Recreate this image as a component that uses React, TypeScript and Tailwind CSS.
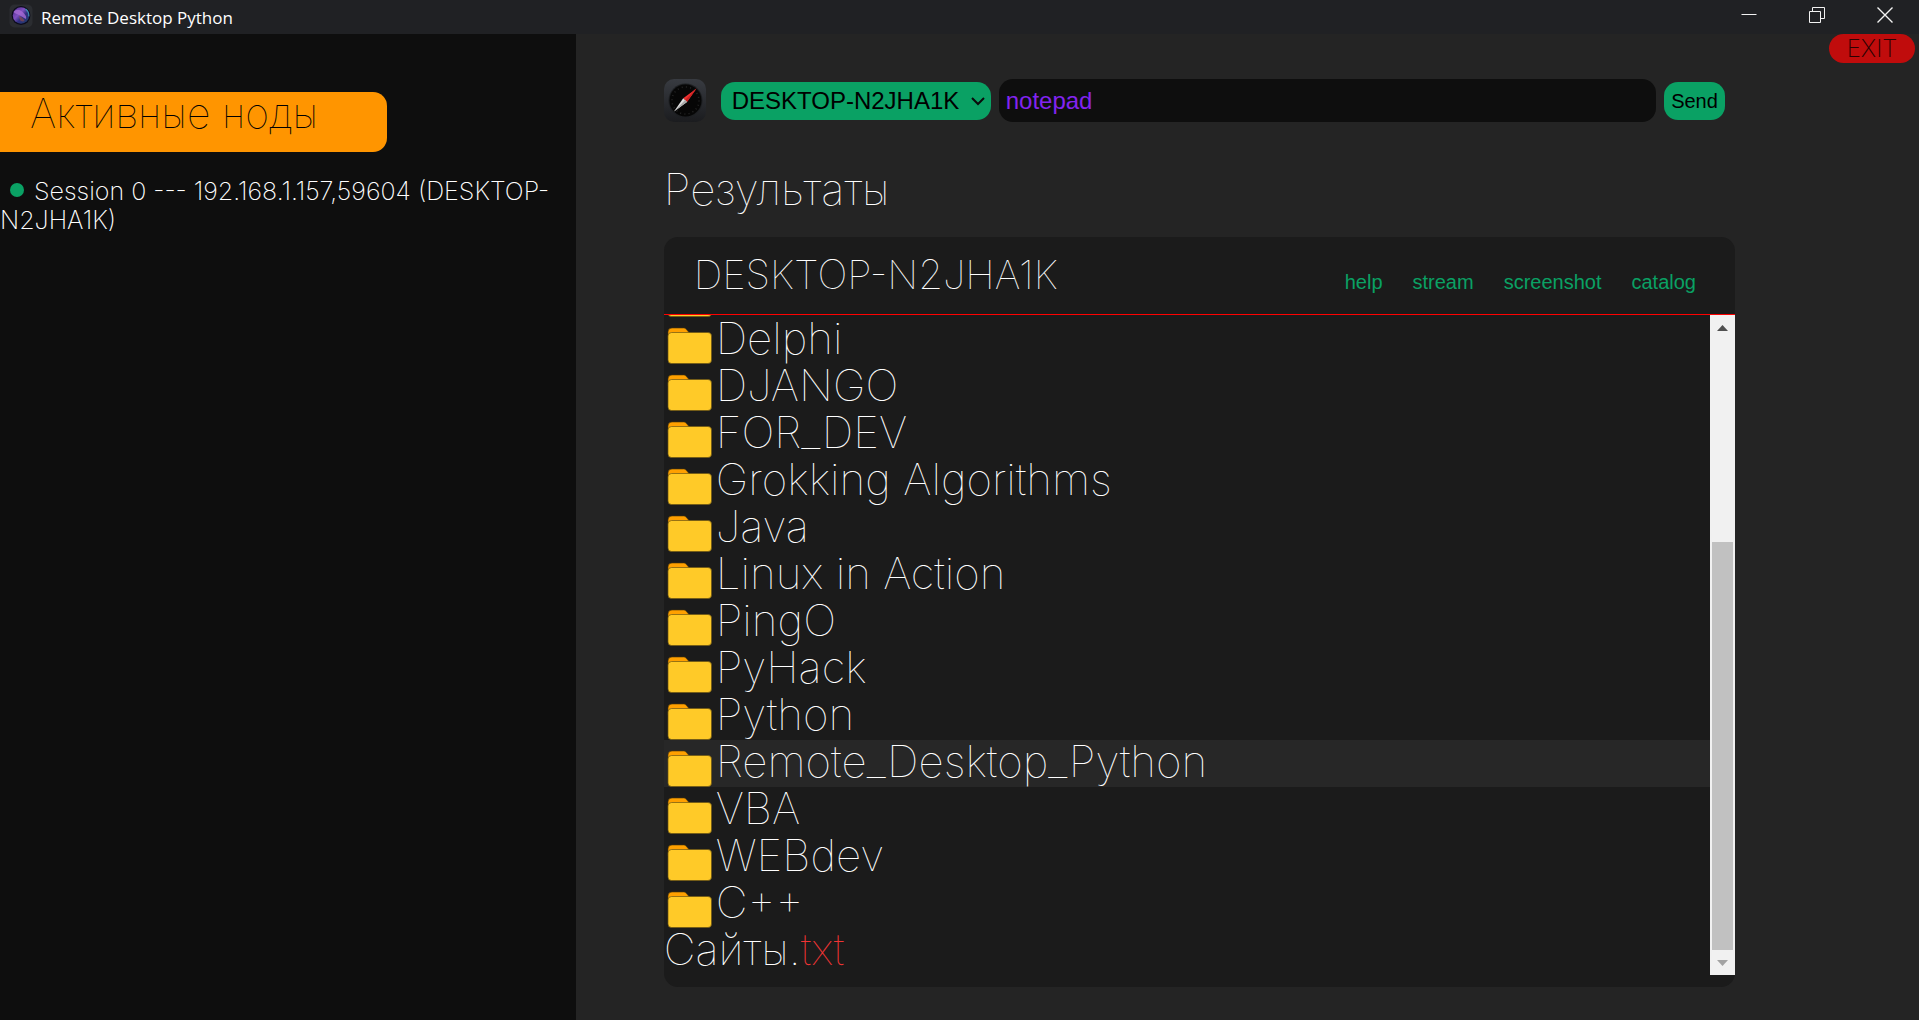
import { useState } from "react";

const folders = [
  "Delphi",
  "DJANGO",
  "FOR_DEV",
  "Grokking Algorithms",
  "Java",
  "Linux in Action",
  "PingO",
  "PyHack",
  "Python",
  "Remote_Desktop_Python",
  "VBA",
  "WEBdev",
  "C++",
];

const actions = ["help", "stream", "screenshot", "catalog"];

function AppLogo() {
  return (
    <svg viewBox="0 0 24 24" className="size-6" aria-hidden="true">
      <defs>
        <linearGradient id="orb" x1="0" y1="0" x2="1" y2="1">
          <stop offset="0" stopColor="#4a2a86" />
          <stop offset="0.4" stopColor="#8050c0" />
          <stop offset="0.6" stopColor="#302f80" />
          <stop offset="1" stopColor="#1c3f66" />
        </linearGradient>
      </defs>
      <rect x="0.5" y="0.5" width="23" height="23" rx="5" fill="#2b2d31" />
      <circle cx="12" cy="11.500" r="9.4" fill="#0c0b1c" />
      <circle cx="12" cy="11.500" r="8.2" fill="url(#orb)" />
      <path d="M4.500 8c3-4 8-2 11 2 1.500 2 2 3 1.500 5-3-1-4-3-7-4-2-1-4-1.500-5.500-3z" fill="#a86bd6" opacity="0.8" />
      <path d="M10 12c3 1 5 3 5.500 5-2 1-4 0-4.500-1z" fill="#8a4a4c" opacity="0.7" />
      <path d="M16.500 5a8.200 8.200 0 0 1 3.300 7.400" fill="none" stroke="#3c8fb0" strokeWidth="1.200" />
    </svg>
  );
}

function CompassIcon() {
  return (
    <svg viewBox="0 0 42 43" className="h-[43px] w-[42px] shrink-0" aria-hidden="true">
      <defs>
        <linearGradient id="case" x1="0" y1="0" x2="0" y2="1">
          <stop offset="0" stopColor="#383b41" />
          <stop offset="1" stopColor="#1b1c1f" />
        </linearGradient>
      </defs>
      <rect width="42" height="43" rx="10" fill="url(#case)" />
      <circle cx="21.500" cy="21.500" r="17" fill="#1d1f22" />
      <circle cx="21.500" cy="21.500" r="16" fill="#060606" />
      <circle cx="21.500" cy="21.500" r="13.500" fill="none" stroke="#262626" strokeWidth="1.500" strokeDasharray="1 3.240" />
      <path d="M32.500 9.500 19.200 19.200l3.800 3.800z" fill="#ee3030" />
      <path d="M32.500 9.500 21.100 21.100l1.900 1.900z" fill="#c92020" />
      <path d="M10 32.500 19.200 19.200l3.800 3.800z" fill="#e2e2e2" />
      <path d="M10 32.500 21.100 21.100l1.900 1.900z" fill="#a8a8a8" />
    </svg>
  );
}

function FolderIcon() {
  return (
    <svg viewBox="0 0 46 37" className="h-[37px] w-[46px] shrink-0" aria-hidden="true">
      <path
        d="M5 1h11.500c1.200 0 2 .4 2.700 1.200L22 5.500V12H1V5a4 4 0 0 1 4-4z"
        fill="#ffa000"
        stroke="#4d3806"
        strokeWidth="0.6"
      />
      <rect x="1" y="5.500" width="43.500" height="31" rx="3.500" fill="#ffca28" stroke="#6b5413" strokeWidth="0.7" />
    </svg>
  );
}

function WindowControls() {
  const stroke = { fill: "none", stroke: "#f2f2f2", strokeWidth: 1 } as const;
  return (
    <div className="flex h-full shrink-0">
      <button type="button" aria-label="Minimize" className="flex w-[68px] items-center justify-center pb-1">
        <svg viewBox="0 0 16 16" className="size-4">
          <path d="M0.500 7.500h15" {...stroke} />
        </svg>
      </button>
      <button type="button" aria-label="Restore" className="flex w-[68px] items-center justify-center pb-1">
        <svg viewBox="0 0 16 16" className="size-4">
          <path d="M.5 4.500h11v11H.5zM3.500 4.500v-4h12v11h-4" {...stroke} />
        </svg>
      </button>
      <button type="button" aria-label="Close" className="flex w-[68px] items-center justify-center pb-1">
        <svg viewBox="0 0 16 16" className="size-4">
          <path d="M.5.5l15 15M15.500.5l-15 15" {...stroke} strokeWidth={1.400} />
        </svg>
      </button>
    </div>
  );
}

function Scrollbar() {
  return (
    <div className="flex w-[25px] shrink-0 flex-col bg-[#f1f1f1] px-[2px]" aria-hidden="true">
      <div className="flex h-[25px] items-center justify-center">
        <svg viewBox="0 0 11 6" className="h-[6px] w-[11px]">
          <path d="M0 6 5.500 0 11 6z" fill="#505050" />
        </svg>
      </div>
      <div className="flex-[202]" />
      <div className="flex-[408] bg-[#c1c1c1]" />
      <div className="flex h-[25px] items-center justify-center">
        <svg viewBox="0 0 11 6" className="h-[6px] w-[11px]">
          <path d="M0 0h11L5.500 6z" fill="#a3a3a3" />
        </svg>
      </div>
    </div>
  );
}

export default function App() {
  const [command, setCommand] = useState("notepad");

  return (
    <div className="flex h-screen flex-col bg-[#242424] font-['Inter',sans-serif] font-thin text-white">
      <header className="flex h-[34px] shrink-0 items-center justify-between bg-[#202124]">
        <div className="flex items-center gap-2 pb-0.5 pl-[9px]">
          <AppLogo />
          <span className="pt-1 font-['Open_Sans',sans-serif] text-[17px] leading-6 font-normal">Remote Desktop Python</span>
        </div>
        <WindowControls />
      </header>

      <div className="flex min-h-0 flex-1">
        <aside className="w-[30%] shrink-0 bg-[#0e0e0e] pt-[58px]">
          <h2 className="h-[60px] w-[387px] rounded-r-[14px] bg-[#ff9500] pl-[30px] text-[41px] leading-[42px] font-thin text-black">
            Активные ноды
          </h2>
          <p className="mt-[25px] text-[25px] leading-[29px] font-extralight">
            <span className="mr-[10px] ml-[10px] inline-block size-[14px] rounded-full bg-[#0aa164] align-[3px]" />
            Session 0 --- 192.168.1.157,59604 (DESKTOP-N2JHA1K)
          </p>
        </aside>

        <main className="flex min-w-0 flex-1 flex-col">
          <div className="flex h-[29px] shrink-0 justify-end pr-1">
            <button
              type="button"
              className="h-[29px] w-[86px] rounded-full bg-[#c00c0c] text-[24px] leading-[29px] font-extralight text-[#2a0202]"
            >
              EXIT
            </button>
          </div>

          <div className="mr-[184px] ml-[88px] flex min-h-0 flex-1 flex-col pb-[33px]">
            <form
              className="mt-4 flex items-center font-['Liberation_Sans',Arial,sans-serif] font-normal"
              onSubmit={(e) => e.preventDefault()}
            >
              <CompassIcon />
              <div className="relative ml-[15px] shrink-0">
                <select
                  aria-label="Node"
                  className="block h-[38px] w-[270px] appearance-none rounded-[14px] bg-[#0aa164] pl-[11px] text-[24px] text-black"
                >
                  <option>DESKTOP-N2JHA1K</option>
                </select>
                <svg
                  viewBox="0 0 14 9"
                  className="pointer-events-none absolute top-[15px] right-[6px] h-[9px] w-[14px]"
                  aria-hidden="true"
                >
                  <path d="M1 1l6 6 6-6" fill="none" stroke="#0b0b0b" strokeWidth="2" />
                </svg>
              </div>
              <input
                aria-label="Command"
                value={command}
                onChange={(e) => setCommand(e.target.value)}
                className="ml-2 h-[43px] min-w-0 flex-1 rounded-[14px] bg-[#0e0e0e] px-[7px] text-[24px] text-[#8224f0] outline-none"
              />
              <button
                type="submit"
                className="mr-[10px] ml-2 h-[38px] w-[61px] rounded-[14px] bg-[#0aa164] text-[20px] text-black"
              >
                Send
              </button>
            </form>

            <h1 className="mt-[41px] text-[44px] leading-[52px] font-thin">Результаты</h1>

            <section className="mt-[22px] flex min-h-0 flex-1 flex-col rounded-[14px] bg-[#1b1b1b] pb-3">
              <div className="flex h-[78px] shrink-0 items-center justify-between border-b border-[#ff0000] pr-[39px] pl-[30px]">
                <h2 className="pb-0.5 text-[40px] leading-[48px] font-thin">DESKTOP-N2JHA1K</h2>
                <nav className="flex gap-[30px] pt-3 font-['Liberation_Sans',Arial,sans-serif] text-[20px] font-normal text-[#0aa164]">
                  {actions.map((name) => (
                    <a key={name} href={`#${name}`}>
                      {name}
                    </a>
                  ))}
                </nav>
              </div>

              <div className="flex min-h-0 flex-1">
                <ul className="flex min-w-0 flex-1 flex-col justify-end overflow-hidden text-[44px] leading-[47px]">
                  <li className="flex h-[47px] shrink-0 items-end pl-[3px]" aria-hidden="true">
                    <FolderIcon />
                  </li>
                  {folders.map((name) => (
                    <li
                      key={name}
                      className={
                        name === "Remote_Desktop_Python"
                          ? "flex h-[47px] shrink-0 items-end bg-[#272727] pl-[3px]"
                          : "flex h-[47px] shrink-0 items-end pl-[3px]"
                      }
                    >
                      <FolderIcon />
                      <span className="pb-0.5 pl-[3px]">{name}</span>
                    </li>
                  ))}
                  <li className="h-[47px] shrink-0">
                    <span className="block leading-[43px]">
                      Сайты.<span className="text-[#f03535]">txt</span>
                    </span>
                  </li>
                </ul>
                <Scrollbar />
              </div>
            </section>
          </div>
        </main>
      </div>
    </div>
  );
}
